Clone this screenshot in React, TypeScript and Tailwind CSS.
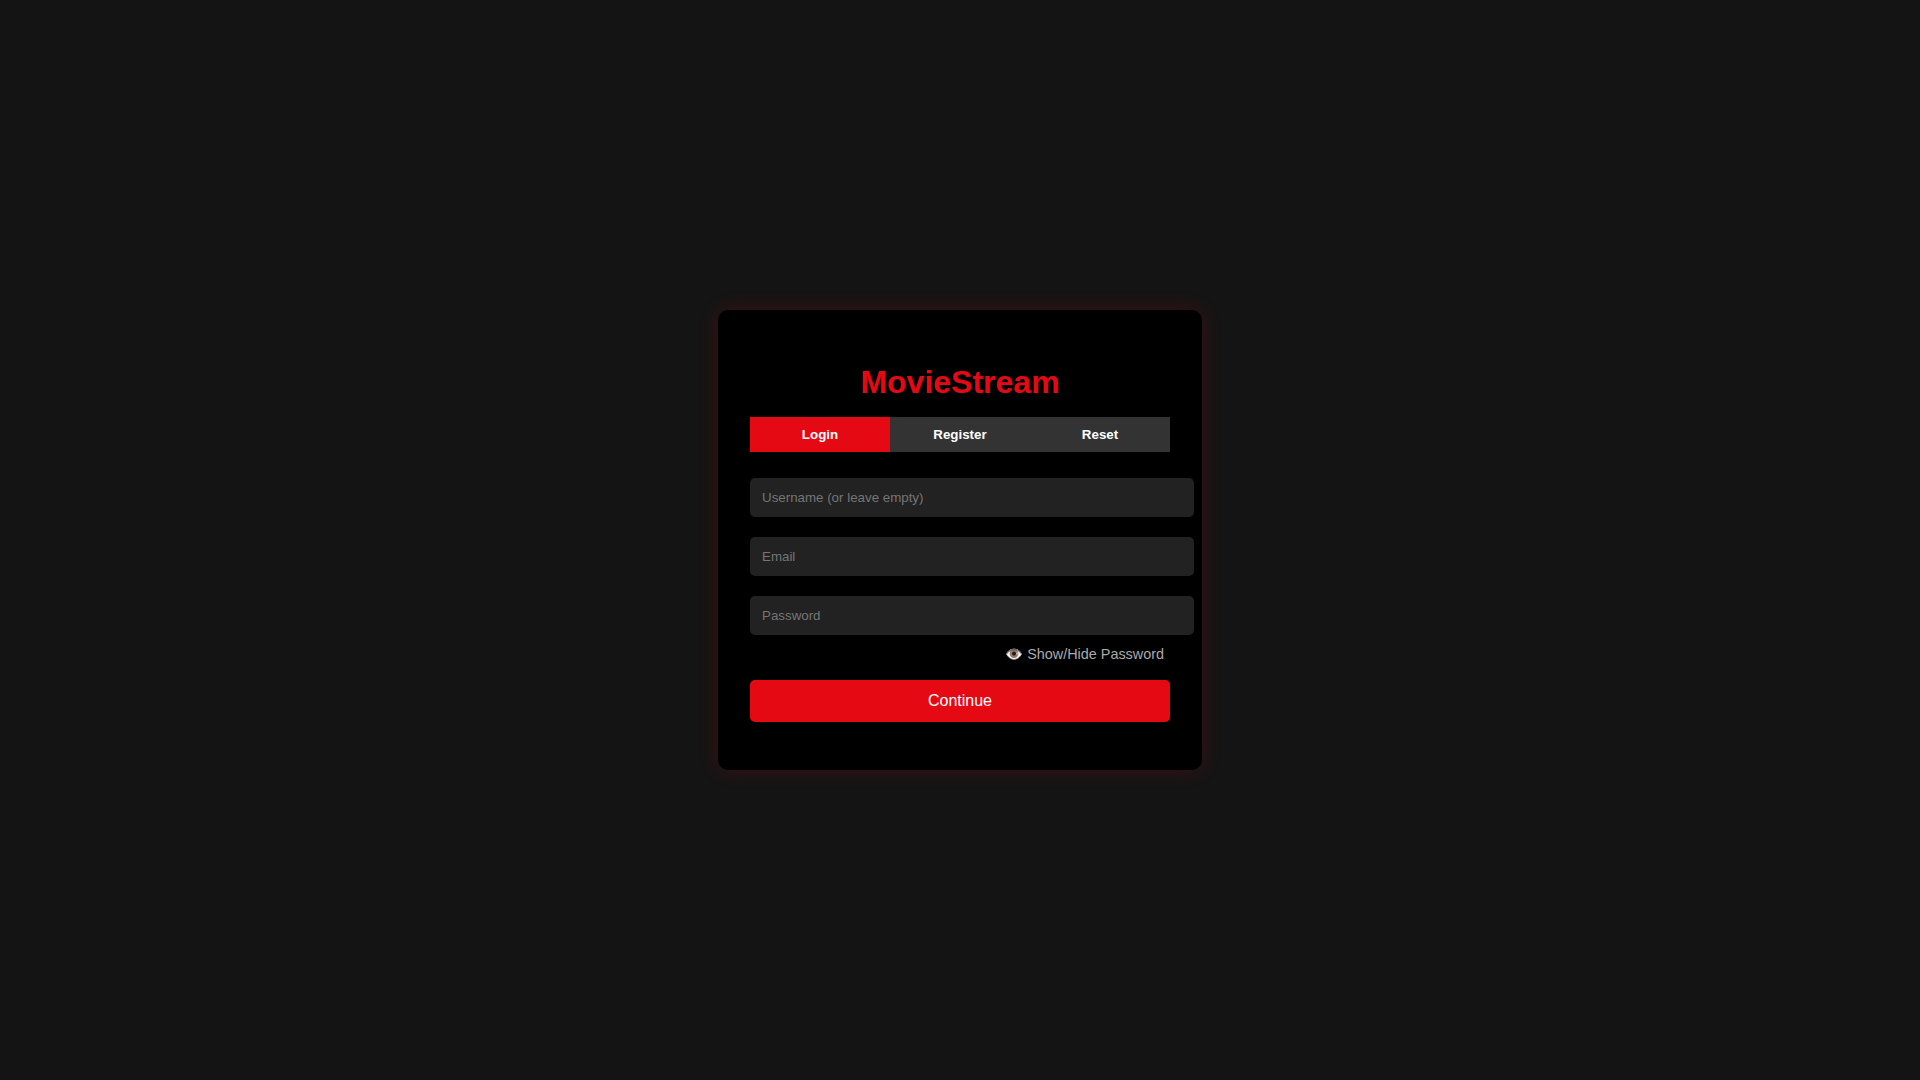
import React from "react";

const inputClass =
  "box-content block w-full h-[15px] py-3 px-3 rounded-[5px] bg-[#222222] text-[13.33px] text-white placeholder:text-[#757575] outline-none";

const App = () => {
  return (
    <div className="min-h-screen flex items-center justify-center bg-[#141414] font-['Liberation_Sans',Arial,sans-serif]">
      <div className="w-[484px] h-[460px] rounded-[10px] bg-black p-8 shadow-[0_0_20px_rgba(229,9,20,0.2)]">
        <h1 className="mt-[22px] mb-[16px] text-center text-[32px] leading-[37px] font-bold text-[#e50914]">
          MovieStream
        </h1>

        <div className="flex mb-[26px]">
          <button className="flex-1 h-[35px] bg-[#e50914] text-[13.33px] font-bold text-white">Login</button>
          <button className="flex-1 h-[35px] bg-[#333333] text-[13.33px] font-bold text-white">Register</button>
          <button className="flex-1 h-[35px] bg-[#333333] text-[13.33px] font-bold text-white">Reset</button>
        </div>

        <div className="flex flex-col gap-5">
          <input className={inputClass} placeholder="Username (or leave empty)" />
          <input className={inputClass} placeholder="Email" />
          <input className={inputClass} type="password" placeholder="Password" />
        </div>

        <div className="mt-[11px] mb-[18px] pr-[6px] h-4 text-right text-[14.4px] leading-4 text-[#aaaaaa]">
          👁️ Show/Hide Password
        </div>

        <button className="w-full h-[42px] rounded-[5px] bg-[#e50914] text-base text-white">Continue</button>
      </div>
    </div>
  );
};

export default App;
